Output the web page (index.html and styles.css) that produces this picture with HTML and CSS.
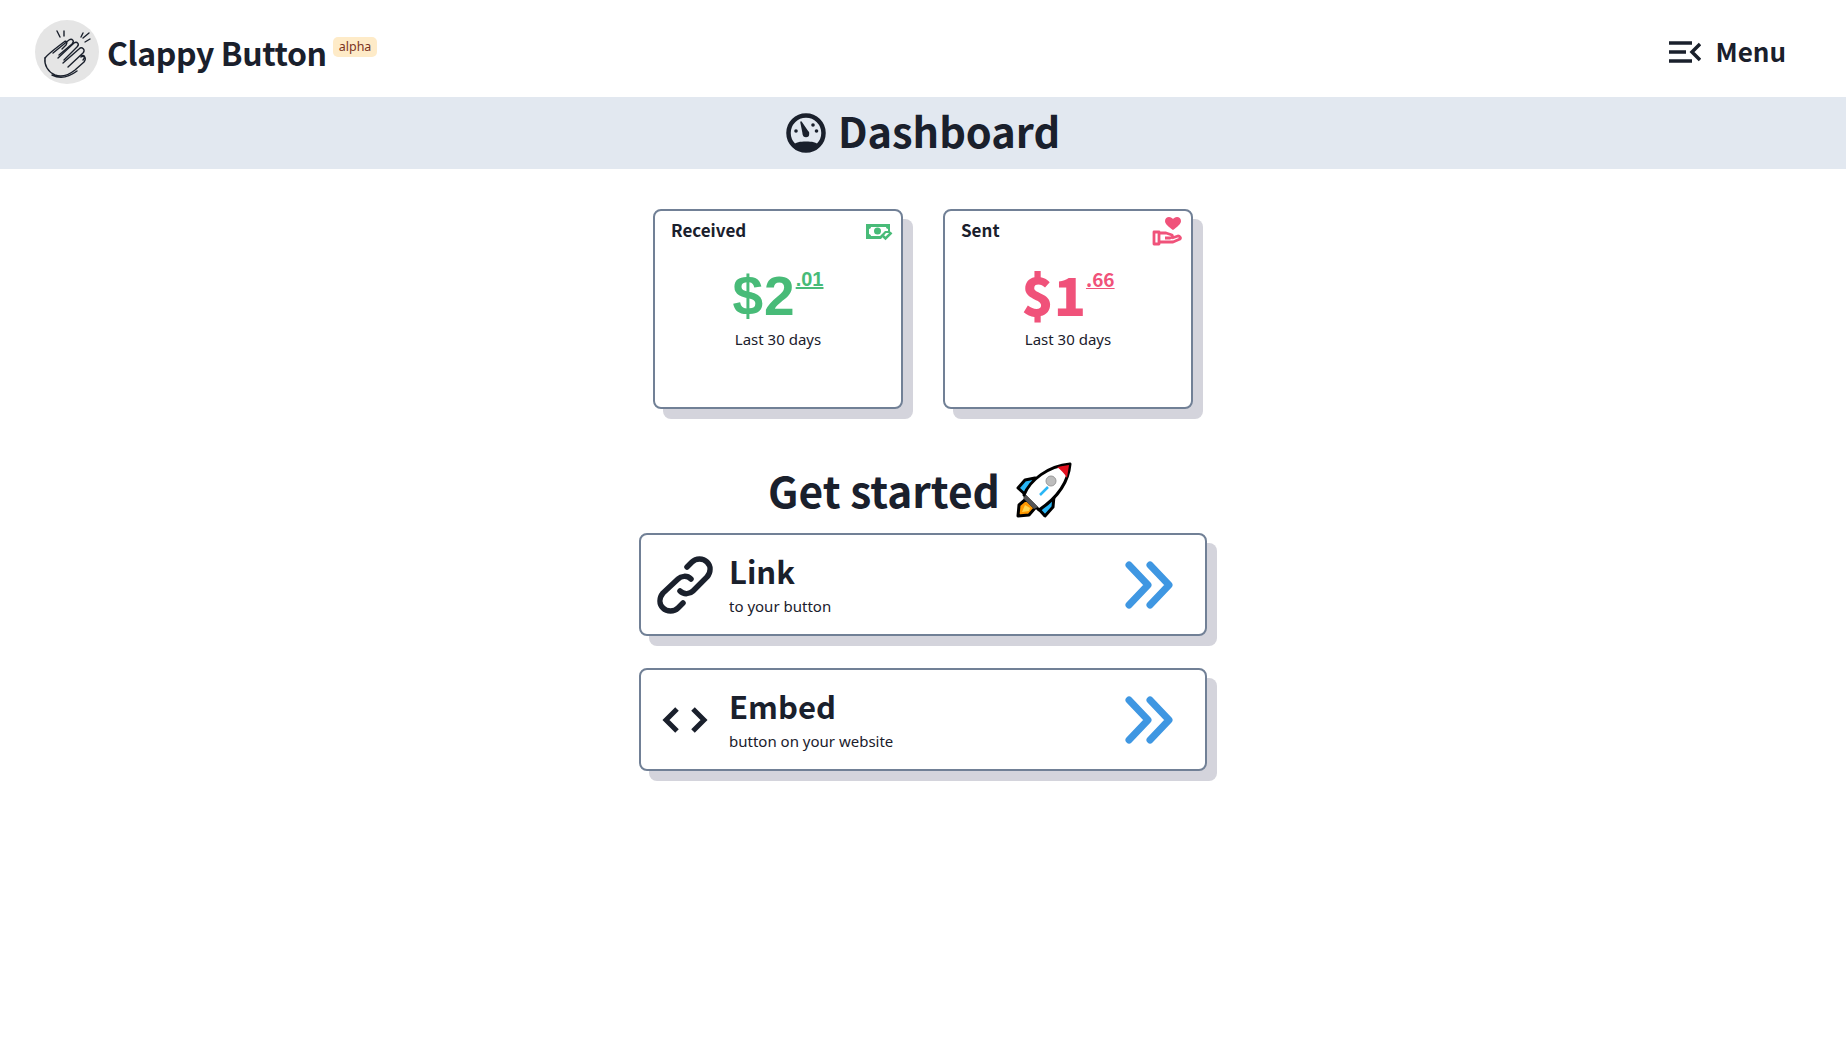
FILE: index.html
```html
<!DOCTYPE html>
<html lang="en">
<head>
    <meta charset="UTF-8">
    <meta name="viewport" content="width=device-width, initial-scale=1.0">
    <title>Clappy Button</title>
    <link rel="stylesheet" href="styles.css">
</head>
<body>
    <header class="topbar">
        <a class="brand" href="#">
            <span class="brand-logo">
                <svg viewBox="0 0 64 64" width="64" height="64" fill="none" stroke="#1a202c" stroke-width="1.400" stroke-linecap="round" stroke-linejoin="round">
                    <path d="M22 11 25 17M29 11V16M46 17 48 13M48 18 54 13M50 22 55 19"/>
                    <path d="M10 38C14 33 24 26 29 22 31 20 33 22 31 25L27 29"/>
                    <path d="M10 38C9 45 13 52 20 55 28 58 35 54 40 50L49 42C52 38 49 35 46 37"/>
                    <path d="M18 33 34 20C37 18 40 21 37 24L24 35"/>
                    <path d="M23 38 39 23C42 21 45 24 42 27L29 40"/>
                    <path d="M28 43 44 29C47 26 51 30 48 33L33 47"/>
                    <path d="M46 36C49 34 51 37 48 40"/>
                    <path d="M17 55C25 59 34 57 42 51"/>
                </svg>
            </span>
            <span class="brand-name">Clappy Button</span>
            <span class="badge">alpha</span>
        </a>
        <a class="menu" href="#">
            <svg viewBox="0 0 32 22" width="32" height="22" fill="none" stroke="#1a202c" stroke-width="3.500">
                <path d="M0 2H23M0 11H17M0 20H23M31 3 23 11 31 19"/>
            </svg>
            <span class="menu-label">Menu</span>
        </a>
    </header>

    <div class="banner">
        <svg viewBox="0 0 40 40" width="40" height="40">
            <circle cx="20" cy="20" r="17.500" fill="none" stroke="#1a202c" stroke-width="4.500"/>
            <path d="M6 33C10 29 14 28.500 20 28.500 26 28.500 30 29 34 33 31 37 26 38 20 38 14 38 9 37 6 33Z" fill="#1a202c"/>
            <path d="M15 9 17.500 21.500 22.500 20Z" fill="#1a202c" stroke="#1a202c" stroke-width="1.500" stroke-linejoin="round"/>
            <circle cx="20" cy="21" r="3.200" fill="#1a202c"/>
            <circle cx="10" cy="18" r="1.800" fill="#1a202c"/>
            <circle cx="27" cy="12" r="1.800" fill="#1a202c"/>
            <circle cx="30.500" cy="18" r="1.800" fill="#1a202c"/>
        </svg>
        <h1>Dashboard</h1>
    </div>

    <main class="content">
        <section class="stats">
            <div class="card stat">
                <div class="stat-head">
                    <span>Received</span>
                    <svg class="stat-icon" viewBox="0 0 28 18" width="28" height="18">
                        <path d="M1 1H25V10H21L16 16H1Z" fill="#48bb78"/>
                        <path d="M6 4H21C21 5 22 6 23 6V8H20L15 13H6C6 12 5 11 4 11V6C5 6 6 5 6 4Z" fill="#fff"/>
                        <circle cx="12.500" cy="8" r="3.500" fill="#48bb78"/>
                        <path d="M18 13 20.500 15.500 26.500 9.500" fill="none" stroke="#48bb78" stroke-width="2.500"/>
                    </svg>
                </div>
                <div class="amount amount-green"><span class="dollars">$2</span><span class="cents">.01</span></div>
                <p class="period">Last 30 days</p>
            </div>
            <div class="card stat">
                <div class="stat-head">
                    <span>Sent</span>
                    <svg class="stat-icon icon-hand" viewBox="0 0 30 30" width="30" height="30">
                        <path d="M21 13C17 10 13 7 13 4 13 1.500 15 0 17 0 19 0 20 1 21 2 22 1 23 0 25 0 27 0 29 1.500 29 4 29 7 25 10 21 13Z" fill="#f0527a"/>
                        <path d="M2 15H7V27H2ZM7 16H14L20 18C21 19 20 21 18 21H13M7 25H21L28 22C29 21 28 19 26 19L20 21" fill="none" stroke="#f0527a" stroke-width="2.800" stroke-linejoin="round"/>
                    </svg>
                </div>
                <div class="amount amount-pink"><span class="dollars">$1</span><span class="cents">.66</span></div>
                <p class="period">Last 30 days</p>
            </div>
        </section>

        <div class="started">
            <h2>Get started</h2>
            <svg class="rocket" viewBox="0 0 56 56" width="56" height="56">
                <path d="M19 16 9 18 2 26 12 35Z" fill="#29b6f6" stroke="#000" stroke-width="3" stroke-linejoin="round"/>
                <path d="M38 34 37 45 29 54 20 44Z" fill="#29b6f6" stroke="#000" stroke-width="3" stroke-linejoin="round"/>
                <path d="M10 37 3 43 2 54 13 53 19 46Z" fill="#ff9800" stroke="#000" stroke-width="3" stroke-linejoin="round"/>
                <path d="M9 43 6 50 13 49 14 46Z" fill="#ffd54f"/>
                <path d="M8 33C14 18 32 4 54 2 52 24 38 38 23 48Z" fill="#fff" stroke="#000" stroke-width="3" stroke-linejoin="round"/>
                <path d="M41 5 53 3 51 16C48 11 45 8 41 5Z" fill="#e3101f"/>
                <path d="M10 33 22 45 18 47 7 36Z" fill="#555"/>
                <path d="M24 33 32 25" stroke="#29b6f6" stroke-width="2.500"/>
                <circle cx="35" cy="19" r="5" fill="#bdbdbd" stroke="#999" stroke-width="1"/>
            </svg>
        </div>

        <a class="card action" href="#">
            <svg class="action-icon" viewBox="0 0 60 60" width="60" height="60" fill="none" stroke="#1a202c" stroke-width="5.500" stroke-linecap="round">
                <path d="M25 36C29 40 35 39 38 36L52 22C56 17 56 11 52 7 48 3 41 3 37 7L32 12"/>
                <path d="M36 24C32 20 26 21 23 24L8 38C4 43 4 49 8 53 12 57 19 57 23 53L28 48"/>
            </svg>
            <div class="action-text">
                <h3>Link</h3>
                <p>to your button</p>
            </div>
            <svg class="chevrons" viewBox="0 0 50 50" width="50" height="50" fill="none" stroke="#3f97e2" stroke-width="7" stroke-linecap="round" stroke-linejoin="round">
                <path d="M6 5 25 25 6 45M27 5 46 25 27 45"/>
            </svg>
        </a>

        <a class="card action" href="#">
            <svg class="action-icon" viewBox="0 0 60 60" width="60" height="60" fill="none" stroke="#1a202c" stroke-width="5">
                <path d="M22 19 11 30 22 41M38 19 49 30 38 41"/>
            </svg>
            <div class="action-text">
                <h3>Embed</h3>
                <p>button on your website</p>
            </div>
            <svg class="chevrons" viewBox="0 0 50 50" width="50" height="50" fill="none" stroke="#3f97e2" stroke-width="7" stroke-linecap="round" stroke-linejoin="round">
                <path d="M6 5 25 25 6 45M27 5 46 25 27 45"/>
            </svg>
        </a>
    </main>
</body>
</html>
```

FILE: styles.css
```css
body {
    margin: 0;
    font-family: 'Noto Sans', sans-serif;
    color: #1a202c;
    background: #fff;
}
a {
    color: inherit;
    text-decoration: none;
}
h1, h2, h3, p {
    margin: 0;
}

.topbar {
    box-sizing: border-box;
    height: 97px;
    display: flex;
    align-items: center;
    justify-content: space-between;
    padding: 7px 60px 0 35px;
}
.brand {
    display: flex;
    align-items: center;
}
.brand-logo {
    width: 64px;
    height: 64px;
    border-radius: 50%;
    background: #e5e5e5;
    display: flex;
    align-items: center;
    justify-content: center;
    margin-right: 8px;
}
.brand-name, .menu, .banner h1, .stat-head, .started h2, .action-text h3, .amount-pink .dollars, .amount-pink .cents {
    font-family: 'Noto Sans CJK JP', 'Noto Sans', sans-serif;
}
.brand-name {
    font-size: 32px;
    font-weight: 700;
    letter-spacing: -0.4px;
    line-height: 40px;
}
.badge {
    align-self: flex-start;
    margin: 17px 0 0 6px;
    padding: 0 6px;
    height: 20px;
    line-height: 20px;
    font-size: 12.500px;
    background: #feebc8;
    color: #7b341e;
    border-radius: 5px;
}
.menu {
    display: flex;
    align-items: center;
    gap: 14px;
    font-size: 26px;
    font-weight: 700;
    line-height: 32px;
}
.menu-label {
    margin-bottom: 2px;
}

.banner {
    height: 72px;
    background: #e2e8f0;
    display: flex;
    align-items: center;
    justify-content: center;
    gap: 12px;
}
.banner h1 {
    font-size: 41.5px;
    font-weight: 700;
    line-height: 50px;
    margin-bottom: 6px;
}

.content {
    display: flex;
    flex-direction: column;
    align-items: center;
}
.card {
    box-sizing: border-box;
    background: #fff;
    border: 2px solid #718096;
    border-radius: 8px;
    box-shadow: 10px 10px 0 #d4d4dc;
}
.stats {
    display: flex;
    gap: 40px;
    margin-top: 40px;
}
.stat {
    width: 250px;
    height: 200px;
    text-align: center;
}
.stat-head {
    display: flex;
    justify-content: space-between;
    padding: 7px 8px 0 16px;
    height: 30px;
    font-size: 17px;
    font-weight: 700;
    line-height: 24px;
}
.stat-icon {
    margin-top: 5px;
}
.icon-hand {
    margin-top: -1px;
    margin-right: 1px;
}
.amount {
    margin-top: 16px;
    height: 64px;
    display: flex;
    justify-content: center;
}
.dollars {
    font-size: 55px;
    font-weight: 700;
    line-height: 64px;
}
.cents {
    font-size: 20px;
    font-weight: 700;
    line-height: 22px;
    height: 22px;
    margin-top: 4px;
    text-decoration: underline;
}
.amount-green {
    color: #48bb78;
    font-family: 'Liberation Sans', sans-serif;
}
.amount-green .dollars {
    letter-spacing: 1px;
}
.amount-pink {
    color: #f0527a;
}
.amount-pink .dollars {
    font-size: 53px;
    font-weight: 900;
    line-height: 58px;
}
.amount-pink .cents {
    font-size: 19px;
}
.period {
    margin-top: 1px;
    font-size: 15px;
}

.started {
    display: flex;
    align-items: center;
    justify-content: center;
    gap: 16px;
    height: 64px;
    margin-top: 49px;
    margin-bottom: 11px;
}
.started h2 {
    font-size: 42.500px;
    font-weight: 700;
    line-height: 50px;
}
.rocket {
    margin-right: 6px;
}
.action {
    width: 568px;
    height: 103px;
    display: flex;
    align-items: center;
    padding: 0 32px 0 14px;
    margin-bottom: 32px;
}
.action-icon {
    flex: none;
}
.action-text {
    flex: 1;
    margin-left: 14px;
}
.action-text h3 {
    font-size: 31px;
    font-weight: 700;
    line-height: 36px;
}
.action-text p {
    font-size: 15px;
    line-height: 22px;
    margin-top: 6px;
}
```
